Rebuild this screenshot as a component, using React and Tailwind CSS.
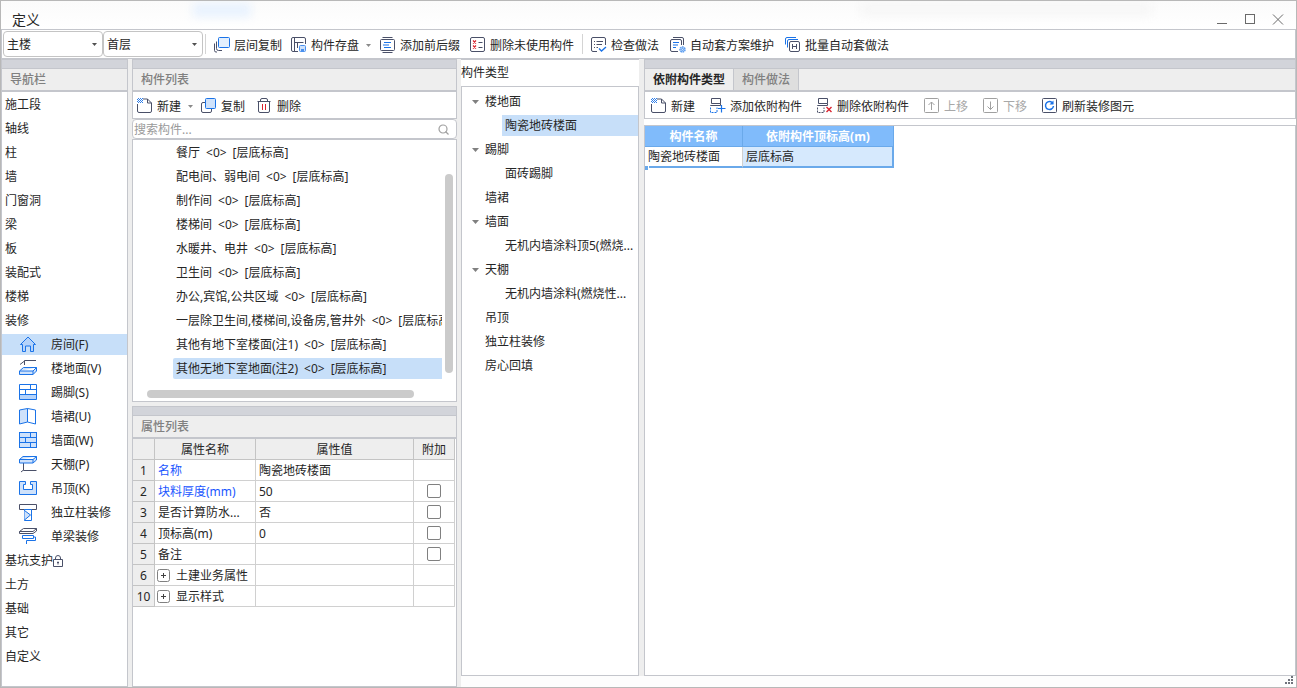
import { useState } from 'react';

const INK   = '#4a5068';
const BLUE  = '#1a73e8';
const LIGHT = '#cfe2fb';

// ── Icons ────────────────────────────────────────────────────────
function Icon({ children }) {
  return (
    <svg width="16" height="16" viewBox="0 0 16 16" fill="none"
         stroke={INK} strokeWidth="1" className="shrink-0" aria-hidden="true">
      {children}
    </svg>
  );
}

function NavIcon({ children }) {
  return (
    <svg width="18" height="18" viewBox="0 1 18 18" fill="none"
         stroke={INK} strokeWidth="1" className="shrink-0 overflow-visible" aria-hidden="true">
      {children}
    </svg>
  );
}

function Caret({ className = '' }) {
  return (
    <svg width="5" height="3" viewBox="0 0 5 3" className={`shrink-0 ${className}`} aria-hidden="true">
      <path d="M0 0h5L2.5 3z" fill="currentColor" />
    </svg>
  );
}

const ICONS = {
  layerCopy: (
    <Icon>
      <path d="M.5 6.500v7a1.500 1.500 0 0 0 1.500 1.500h1M2.500 4.500v7a2 2 0 0 0 2 2H8" />
      <rect x="4.500" y=".5" width="11" height="10" rx="1" fill="#e3effd" stroke={BLUE} />
    </Icon>
  ),
  save: (
    <Icon>
      <path d="M7 14.500H2A1.500 1.500 0 0 1 .5 13V2A1.500 1.500 0 0 1 2 .5h11A1.500 1.500 0 0 1 14.500 2v5M3.500 .5v14M3.500 5.500h9M6.500 5.500V11" />
      <rect x="8.500" y="8.500" width="6" height="6" rx="1" fill={LIGHT} stroke="#4a90ee" />
      <path d="M10 12h3v3h-3z" fill="#4a90ee" stroke="none" />
    </Icon>
  ),
  affix: (
    <Icon>
      <rect x=".5" y="2.500" width="14" height="11" rx="1" />
      <path d="M2.500 .5h10M2.500 15.500h10" />
      <path d="M4 5.500h7M3 8h6M4 10.500h7" stroke={BLUE} strokeWidth="1.200" />
    </Icon>
  ),
  removeUnused: (
    <Icon>
      <rect x=".5" y=".5" width="14" height="14" rx="1.500" />
      <path d="M3 3.500l3 3M6 3.500l-3 3M3 8.500l3 3M6 8.500l-3 3" stroke="#d9232e" strokeWidth="1.200" />
      <path d="M8.500 5.500H12.500M8.500 10.500H12.500" />
    </Icon>
  ),
  check: (
    <Icon>
      <path d="M6 14.500H2A1.500 1.500 0 0 1 .5 13V2A1.500 1.500 0 0 1 2 .5h11A1.500 1.500 0 0 1 14.500 2v6M3 4.500h1M5.500 4.500H12M3 7.500h1M5.500 7.500H11M3 10.500h1M5.500 10.500H7" />
      <path d="M8 11.500l2.500 2.500 4.500-4" stroke={BLUE} strokeWidth="1.400" />
    </Icon>
  ),
  scheme: (
    <Icon>
      <path d="M3 .5h9A1.500 1.500 0 0 1 13.500 2v6M8 14.500H2A1.500 1.500 0 0 1 .5 13V4A1.500 1.500 0 0 1 2 2.500h8A1.500 1.500 0 0 1 11.500 4v4" />
      <path d="M3 5.500h6M3 8h5M3 10.500h3" stroke={BLUE} strokeWidth="1.200" />
      <circle cx="12.500" cy="12.500" r="2.500" fill={LIGHT} stroke="#5a9cf0" strokeWidth="1.600" strokeDasharray="1.600 .6" />
      <circle cx="12.500" cy="12.500" r="1" stroke="#5a9cf0" />
    </Icon>
  ),
  batch: (
    <Icon>
      <path d="M.5 7.500V2A1.500 1.500 0 0 1 2 .5h9M2.500 10.500V4A1.500 1.500 0 0 1 4 2.500h9" stroke={BLUE} />
      <rect x="4.500" y="4.500" width="10" height="10" rx="1.500" />
      <path d="M7.500 7v5M11.500 7v5M7.500 9.500h4" />
    </Icon>
  ),
  create: (
    <Icon>
      <path d="M.5 6v7A1.500 1.500 0 0 0 2 14.500h11a1.500 1.500 0 0 0 1.500-1.500V5L10.500 1H6M10.500 1v4h4" />
      <path d="M0 1.500h5M0 3.500h5" stroke="#2f7fea" strokeWidth="1.200" strokeDasharray="1 1" />
      <path d="M1 .5h5M1 2.500h5M1 4.500h5" stroke="#2f7fea" strokeDasharray="1 1" />
    </Icon>
  ),
  copy: (
    <Icon>
      <path d="M4.500 4.500H2A1.500 1.500 0 0 0 .5 6v7A1.500 1.500 0 0 0 2 14.500h7a1.500 1.500 0 0 0 1.500-1.500v-2.500" />
      <rect x="4.500" y=".5" width="10" height="10" rx="1" fill={LIGHT} stroke={BLUE} />
    </Icon>
  ),
  trash: (
    <Icon>
      <path d="M.5 3.500h13M3.500 3.500V2A1.500 1.500 0 0 1 5 .5h4A1.500 1.500 0 0 1 10.500 2v1.500M1.500 3.500V13A1.500 1.500 0 0 0 3 14.500h8a1.500 1.500 0 0 0 1.500-1.500V3.500" />
      <path d="M5.500 6v6M8.500 6v6" stroke="#d9232e" />
    </Icon>
  ),
  attach: (
    <Icon>
      <path d="M1.500 .5h9v5h-9zM.5 8V7.500h10V5.500" />
      <path d="M.5 9.500v5H7V9.500" stroke={BLUE} strokeDasharray="2 1" />
      <path d="M11.500 7v7.500M8 10.500h7.500" stroke={BLUE} strokeWidth="1.200" />
    </Icon>
  ),
  detach: (
    <Icon>
      <path d="M1.500 .5h9v5h-9zM.5 8V7.500h10V5.500" />
      <path d="M.5 9.500v5H7V9.500" strokeDasharray="2 1" />
      <path d="M9.500 9l5 5M14.500 9l-5 5" stroke="#d9232e" strokeWidth="1.400" />
    </Icon>
  ),
  up: (
    <Icon>
      <g stroke="#a0a0a0">
        <rect x=".5" y=".5" width="14" height="14" rx="1" />
        <path d="M7.500 12V4M4.500 7l3-3 3 3" />
      </g>
    </Icon>
  ),
  down: (
    <Icon>
      <g stroke="#a0a0a0">
        <rect x=".5" y=".5" width="14" height="14" rx="1" />
        <path d="M7.500 3.500v8M4.500 8.500l3 3 3-3" />
      </g>
    </Icon>
  ),
  refresh: (
    <Icon>
      <rect x=".5" y=".5" width="14" height="14" rx="1" />
      <path d="M11 5.500A4 4 0 1 0 11.500 8" stroke={BLUE} strokeWidth="1.500" />
      <path d="M11.500 2.500v4h-4z" fill={BLUE} stroke="none" />
    </Icon>
  ),
  room: (
    <NavIcon>
      <path d="M1.500 9.500L9 2l7.500 7.500h-2v7h-3v-5.500h-5v5.500h-3v-7z" fill="#b5d3fa" stroke={BLUE} />
    </NavIcon>
  ),
  floor: (
    <NavIcon>
      <path d="M5.500 6V1.500H17M5.500 2L1 5.500" />
      <path d="M.5 12l4-3.500h13L14 12zM.5 12v3.500H14l3.500-3.500V8.500M14 12v3.500" fill={LIGHT} stroke={BLUE} />
    </NavIcon>
  ),
  skirting: (
    <NavIcon>
      <path d="M.5 11.500h17v5H.5z" fill="#b5d3fa" stroke="none" />
      <path d="M.5 1.500h17v15H.5zM.5 6.500h17M.5 11.500h17M11.500 1.500v5M6.500 6.500v5" stroke={BLUE} />
    </NavIcon>
  ),
  dado: (
    <NavIcon>
      <path d="M.5 3l8-1.500V15L.5 17z" fill={LIGHT} stroke="none" />
      <path d="M.5 3l8-1.500 8 1.500v14l-8-2-8 2zM8.500 1.500V15" stroke={BLUE} />
    </NavIcon>
  ),
  wall: (
    <NavIcon>
      <rect x=".5" y="1.500" width="17" height="15" fill={LIGHT} stroke={BLUE} />
      <path d="M.5 6.500h17M.5 11.500h17M11.500 1.500v5M6.500 6.500v5M11.500 11.500v5" stroke={BLUE} />
    </NavIcon>
  ),
  ceiling: (
    <NavIcon>
      <path d="M4.500 8v7.500H17.500M4.500 15l-2.500 2" />
      <path d="M.5 4.500l3.500-3h13.500L14 4.500zM.5 4.500V8H14l3.500-3V1.500M14 4.500V8" fill={LIGHT} stroke={BLUE} />
    </NavIcon>
  ),
  suspended: (
    <NavIcon>
      <path d="M.5 2.500h6v3h-2v5h9v-5h-2v-3h6v13H.5z" fill={LIGHT} stroke={BLUE} />
    </NavIcon>
  ),
  column: (
    <NavIcon>
      <path d="M.5 1.500h17v5H.5z" />
      <path d="M5.500 6.500h7v11h-7z" fill="#fff" stroke={BLUE} />
      <path d="M5.500 7.500l6 4.500-6 5" fill={LIGHT} stroke={BLUE} />
    </NavIcon>
  ),
  beam: (
    <NavIcon>
      <path d="M.5 4.500l4-3h13l-3.500 3zM.5 4.500v2H14l3.500-2.500V1.500" />
      <path d="M3.500 8.500h11v3h-11zM14.500 10h2v3.500H7.500V17" stroke={BLUE} />
    </NavIcon>
  ),
  lock: (
    <svg width="10" height="12" viewBox="0 0 10 12" fill="none" stroke={INK} aria-hidden="true">
      <path d="M.5 4.500h9v7h-9zM2.500 4.500V3a2.500 2.500 0 0 1 5 0v1.500" />
      <path d="M5 6.500v3M4 7.500h2" />
    </svg>
  ),
};

// ── Data ─────────────────────────────────────────────────────────
const NAV_ITEMS = [
  { label: '施工段' },
  { label: '轴线' },
  { label: '柱' },
  { label: '墙' },
  { label: '门窗洞' },
  { label: '梁' },
  { label: '板' },
  { label: '装配式' },
  { label: '楼梯' },
  { label: '装修' },
  { label: '房间(F)', icon: 'room' },
  { label: '楼地面(V)', icon: 'floor' },
  { label: '踢脚(S)', icon: 'skirting' },
  { label: '墙裙(U)', icon: 'dado' },
  { label: '墙面(W)', icon: 'wall' },
  { label: '天棚(P)', icon: 'ceiling' },
  { label: '吊顶(K)', icon: 'suspended' },
  { label: '独立柱装修', icon: 'column' },
  { label: '单梁装修', icon: 'beam' },
  { label: '基坑支护', locked: true },
  { label: '土方' },
  { label: '基础' },
  { label: '其它' },
  { label: '自定义' },
];

const COMPONENTS = [
  '餐厅',
  '配电间、弱电间',
  '制作间',
  '楼梯间',
  '水暖井、电井',
  '卫生间',
  '办公,宾馆,公共区域',
  '一层除卫生间,楼梯间,设备房,管井外',
  '其他有地下室楼面(注1)',
  '其他无地下室地面(注2)',
];

const PROPERTIES = [
  { no: 1, name: '名称', value: '陶瓷地砖楼面', key: true },
  { no: 2, name: '块料厚度(mm)', value: '50', key: true, extra: true },
  { no: 3, name: '是否计算防水...', value: '否', extra: true },
  { no: 4, name: '顶标高(m)', value: '0', extra: true },
  { no: 5, name: '备注', value: '', extra: true },
  { no: 6, name: '土建业务属性', value: '', group: true },
  { no: 10, name: '显示样式', value: '', group: true },
];

const TYPE_TREE = [
  { label: '楼地面', open: true },
  { label: '陶瓷地砖楼面', child: true },
  { label: '踢脚', open: true },
  { label: '面砖踢脚', child: true },
  { label: '墙裙' },
  { label: '墙面', open: true },
  { label: '无机内墙涂料顶5(燃烧...', child: true },
  { label: '天棚', open: true },
  { label: '无机内墙涂料(燃烧性...', child: true },
  { label: '吊顶' },
  { label: '独立柱装修' },
  { label: '房心回填' },
];

// ── Shared pieces ────────────────────────────────────────────────
function ToolButton({ icon, label, menu, disabled }) {
  return (
    <button
      type="button"
      disabled={disabled}
      className="flex items-center gap-1 whitespace-nowrap pt-[2px] disabled:text-[#a8a8a8]"
    >
      {ICONS[icon]}
      <span className="pt-px">{label}</span>
      {menu && <Caret className="ml-[3px] text-[#8a8a8a]" />}
    </button>
  );
}

function Combo({ label, value }) {
  return (
    <div className="relative w-[100px]">
      <select
        aria-label={label}
        className="block h-[26px] w-full appearance-none rounded-[4px] border border-[#c4c4c4] bg-white pl-[3px] pt-[2px]"
      >
        <option>{value}</option>
      </select>
      <Caret className="pointer-events-none absolute right-[6px] top-[12px] text-[#505050]" />
    </div>
  );
}

function PanelHeader({ title, children }) {
  return (
    <div className="border border-[#c4c6cc] bg-[#eeeeee]">
      <div className="h-[9px] border-b border-[#c4c6cc] bg-[#d2d4da]" />
      {title
        ? <h2 className="flex h-[21px] items-center px-2 font-medium text-[#808080]">{title}</h2>
        : <div className="flex h-[21px]">{children}</div>}
    </div>
  );
}

function TitleBar() {
  return (
    <header className="relative flex h-[28px] items-end justify-between overflow-hidden bg-linear-to-b from-[#fbfbfb] to-white pl-[11px] pr-[12px]">
      <div className="absolute left-[192px] top-[2px] h-[14px] w-[58px] bg-[#e8f2fe] blur-[5px]" />
      <div className="absolute left-[860px] top-[2px] h-[12px] w-[290px] bg-[#f6f6f6] blur-[5px]" />
      <h1 className="relative text-[14px] leading-[18px]">定义</h1>
      <div className="relative flex gap-[16px] pb-[3px] text-[#6a6a6a]">
        <button type="button" aria-label="最小化">
          <svg width="12" height="12" viewBox="0 0 12 12" stroke="currentColor"><path d="M1 9.500h10" /></svg>
        </button>
        <button type="button" aria-label="最大化">
          <svg width="12" height="12" viewBox="0 0 12 12" fill="none" stroke="currentColor"><rect x="1.500" y=".5" width="9" height="9" /></svg>
        </button>
        <button type="button" aria-label="关闭">
          <svg width="12" height="12" viewBox="0 0 12 12" stroke="currentColor"><path d="M1 .5l10 10M11 .5L1 10.500" /></svg>
        </button>
      </div>
    </header>
  );
}

function MainToolbar() {
  return (
    <div className="flex h-[30px] items-center border border-[#c4c6cc] bg-white pl-px">
      <Combo label="楼栋" value="主楼" />
      <Combo label="楼层" value="首层" />
      <div className="ml-[2px] h-5 w-px bg-[#d4d4d4]" />
      <div className="ml-2 flex gap-[9px]">
        <ToolButton icon="layerCopy" label="层间复制" />
        <ToolButton icon="save" label="构件存盘" menu />
        <ToolButton icon="affix" label="添加前后缀" />
      </div>
      <div className="ml-[10px] flex">
        <ToolButton icon="removeUnused" label="删除未使用构件" />
      </div>
      <div className="ml-2 h-5 w-px bg-[#d4d4d4]" />
      <div className="ml-2 flex gap-[11px]">
        <ToolButton icon="check" label="检查做法" />
        <ToolButton icon="scheme" label="自动套方案维护" />
        <ToolButton icon="batch" label="批量自动套做法" />
      </div>
    </div>
  );
}

// ── Panels ───────────────────────────────────────────────────────
function NavPanel() {
  const [active, setActive] = useState('房间(F)');

  return (
    <nav className="flex w-[127px] shrink-0 flex-col bg-white">
      <PanelHeader title="导航栏" />
      <ul className="flex-1 border border-[#c4c6cc]">
        {NAV_ITEMS.map(({ label, icon, locked }) => (
          <li key={label} className="h-6 pb-px pt-[2px]">
            <button
              type="button"
              onClick={() => setActive(label)}
              className={`flex h-[21px] w-full items-center whitespace-nowrap
                         ${icon ? 'gap-[14px] pl-[17px]' : 'pl-[3px]'}
                         ${active === label ? 'bg-[#c7dff9]' : ''}`}
            >
              {icon && ICONS[icon]}
              {label}
              {locked && ICONS.lock}
            </button>
          </li>
        ))}
      </ul>
    </nav>
  );
}

function ComponentList() {
  const [selected, setSelected] = useState(9);

  return (
    <section>
      <PanelHeader title="构件列表" />
      <div className="flex h-[28px] items-center border border-[#c4c6cc] bg-white pl-1">
        <ToolButton icon="create" label="新建" menu />
        <div className="ml-2 flex gap-3">
          <ToolButton icon="copy" label="复制" />
          <ToolButton icon="trash" label="删除" />
        </div>
      </div>
      <label className="flex h-5 items-center rounded-[4px] border border-[#c4c6cc] bg-white pl-px pr-[7px]">
        <input
          type="text"
          aria-label="搜索构件"
          placeholder="搜索构件..."
          className="h-[18px] min-w-0 flex-1 bg-transparent pt-[2px] outline-none placeholder:text-[#9a9a9a]"
        />
        <svg width="11" height="11" viewBox="0 0 11 11" fill="none" stroke="#a0a0a0" strokeWidth="1.200">
          <circle cx="5" cy="5" r="4" />
          <path d="M7.500 7.500l3 3" />
        </svg>
      </label>
      <div className="border border-[#c4c6cc] bg-white pb-[3px]">
        <div className="flex">
          <ul className="min-w-0 flex-1 overflow-hidden pl-10">
            {COMPONENTS.map((name, i) => (
              <li key={name} className="h-6 pb-px pt-[2px]">
                <button
                  type="button"
                  onClick={() => setSelected(i)}
                  className={`flex h-[21px] w-full items-center gap-[6px] whitespace-nowrap rounded-l-[2px] pl-[3px]
                             ${selected === i ? 'bg-[#c7dff9]' : ''}`}
                >
                  <span>{name}</span>
                  <span>&lt;0&gt;</span>
                  <span>[层底标高]</span>
                </button>
              </li>
            ))}
          </ul>
          <div className="w-[14px] pl-[3px] pt-[34px]">
            <div className="h-[199px] w-2 rounded-full bg-[#cbcbcb]" />
          </div>
        </div>
        <div className="pl-[14px] pt-[10px]">
          <div className="h-2 w-[267px] rounded-full bg-[#cbcbcb]" />
        </div>
      </div>
    </section>
  );
}

function PropertyTable() {
  return (
    <section className="flex flex-1 flex-col">
      <PanelHeader title="属性列表" />
      <div className="flex-1 border border-[#c4c6cc] bg-white pr-px">
        <table className="w-full table-fixed border-separate border-spacing-0">
          <colgroup>
            <col className="w-[22px]" />
            <col className="w-[101px]" />
            <col />
            <col className="w-[41px]" />
          </colgroup>
          <thead>
            <tr className="h-[21px] bg-[#eeeeee]">
              {['', '属性名称', '属性值', '附加'].map((head, i) => (
                <th key={i} className="border-b border-r border-[#c4c4c4] p-0 pt-[2px] font-normal">{head}</th>
              ))}
            </tr>
          </thead>
          <tbody>
            {PROPERTIES.map(row => (
              <tr key={row.no} className="h-[21px]">
                <td className="border-b border-r border-[#c4c4c4] bg-[#eeeeee] p-0 pt-[2px] text-center">{row.no}</td>
                <td className={`border-b border-r border-[#d0d0d0] p-0 ${row.group ? 'pl-[2px]' : 'pl-[3px]'} ${row.key ? 'text-[#1a56ff]' : ''}`}>
                  <div className="flex items-center whitespace-nowrap">
                    {row.group && (
                      <button type="button" aria-label={`展开${row.name}`} className="mr-[6px]">
                        <svg width="13" height="13" viewBox="0 0 13 13" fill="none" stroke="#808080">
                          <rect x=".5" y=".5" width="12" height="12" rx="2" />
                          <path d="M4 6.500h5M6.500 4v5" stroke="#404040" />
                        </svg>
                      </button>
                    )}
                    <span className="pt-[2px]">{row.name}</span>
                  </div>
                </td>
                <td className="border-b border-r border-[#d0d0d0] p-0 pl-[3px] pt-[2px]">{row.value}</td>
                <td className="border-b border-r border-[#d0d0d0] p-0">
                  {row.extra && (
                    <input
                      type="checkbox"
                      aria-label={`附加${row.name}`}
                      className="mx-auto block size-[14px] appearance-none rounded-[2px] border border-[#808080] bg-white checked:bg-[#1a73e8]"
                    />
                  )}
                </td>
              </tr>
            ))}
          </tbody>
        </table>
      </div>
    </section>
  );
}

function TypeTree() {
  const [selected, setSelected] = useState('陶瓷地砖楼面');

  return (
    <section className="flex w-[178px] shrink-0 flex-col bg-white">
      <h2 className="flex h-[27px] items-center border-t border-[#c4c6cc]">构件类型</h2>
      <ul className="flex-1 border border-[#c4c6cc] pt-[2px]">
        {TYPE_TREE.map(({ label, open, child }) => (
          <li key={label} className={`flex h-6 items-center pb-px pt-[2px] ${child ? 'pl-10' : 'pl-[10px]'}`}>
            {!child && (
              <svg width="7" height="4" viewBox="0 0 7 4" className="mr-[3px] shrink-0" aria-hidden="true">
                {open && <path d="M0 0h7L3.500 4z" fill="#808080" />}
              </svg>
            )}
            <button
              type="button"
              onClick={() => setSelected(label)}
              className={`flex h-[21px] flex-1 items-center whitespace-nowrap pl-[3px]
                         ${selected === label ? 'bg-[#c7dff9]' : ''}`}
            >
              {label}
            </button>
          </li>
        ))}
      </ul>
    </section>
  );
}

function AttachmentPanel() {
  return (
    <section className="flex min-w-0 flex-1 flex-col bg-white">
      <PanelHeader>
        <button type="button" className="border-r border-[#c4c6cc] px-2 font-bold whitespace-nowrap">依附构件类型</button>
        <button type="button" className="border-r border-[#c4c6cc] bg-[#dedede] px-2 font-medium whitespace-nowrap text-[#808080]">构件做法</button>
      </PanelHeader>
      <div className="flex h-[28px] items-center gap-[15px] border border-[#c4c6cc] pl-[6px]">
        <ToolButton icon="create" label="新建" />
        <ToolButton icon="attach" label="添加依附构件" />
        <ToolButton icon="detach" label="删除依附构件" />
        <ToolButton icon="up" label="上移" disabled />
        <ToolButton icon="down" label="下移" disabled />
        <ToolButton icon="refresh" label="刷新装修图元" />
      </div>
      <div className="mt-[6px] flex-1 border border-[#c4c6cc]">
        <div className="relative w-[249px]">
          <table className="w-full table-fixed border-separate border-spacing-0">
            <colgroup>
              <col className="w-[98px]" />
              <col />
            </colgroup>
            <thead>
              <tr className="h-[21px] bg-[#80bbfb] text-white">
                <th className="border-b border-r border-[#6aa9ea] p-0 pt-[2px] font-bold">构件名称</th>
                <th className="border-b border-r border-[#6aa9ea] p-0 pt-[2px] font-bold">依附构件顶标高(m)</th>
              </tr>
            </thead>
            <tbody>
              <tr className="h-[21px]">
                <td className="border-b-2 border-r border-[#6aa9ea] border-r-[#d0d0d0] p-0 pl-[3px] pt-px">陶瓷地砖楼面</td>
                <td className="border-b-2 border-r-2 border-[#6aa9ea] bg-[#d6e9fd] p-0 pl-[3px] pt-px">层底标高</td>
              </tr>
            </tbody>
          </table>
          {/* fill handle on the selection corner */}
          <div className="absolute -bottom-[2px] left-0 size-[4px] border-r border-white bg-[#6aa9ea]" />
        </div>
      </div>
    </section>
  );
}

export default function App() {
  return (
    <div className="flex min-h-screen flex-col border border-[#b8b8b8] bg-white font-['Noto_Sans','Noto_Sans_CJK_SC',sans-serif] text-[12px] leading-[18px] text-[#262626]">
      <TitleBar />
      <MainToolbar />
      <main className="flex flex-1 gap-1 bg-[#eeeeee]">
        <NavPanel />
        <div className="flex w-[325px] shrink-0 flex-col gap-1">
          <ComponentList />
          <PropertyTable />
        </div>
        <div className="flex min-w-0 flex-1 flex-col">
          <div className="flex flex-1 gap-[5px]">
            <TypeTree />
            <AttachmentPanel />
          </div>
          <footer className="flex h-[11px] items-start justify-end bg-[#fdfdfd] pr-[3px]">
            <svg width="8" height="8" viewBox="0 0 8 8" fill="#70737c" aria-hidden="true">
              <path d="M6 0h2v2H6zM3 3h2v2H3zM6 3h2v2H6zM0 6h2v2H0zM3 6h2v2H3zM6 6h2v2H6z" />
            </svg>
          </footer>
        </div>
      </main>
    </div>
  );
}
